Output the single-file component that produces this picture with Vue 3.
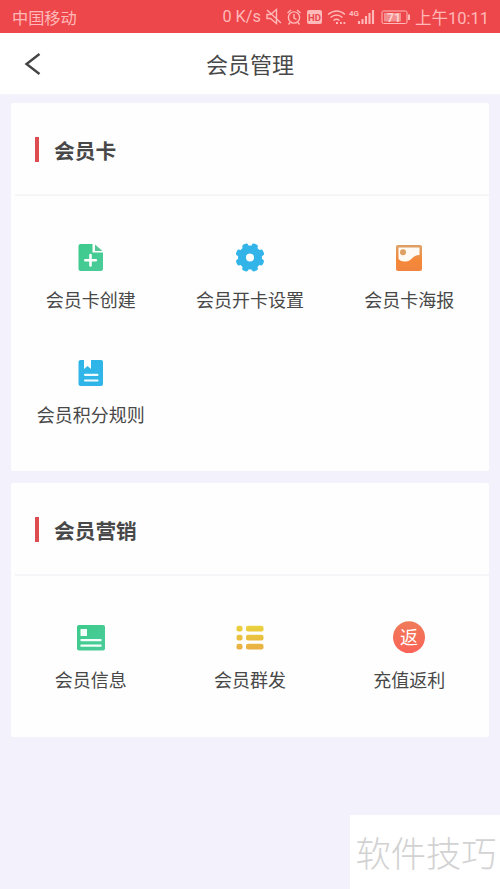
<script setup>
const sections = [
  {
    title: '会员卡',
    items: [
      { icon: 'create', label: '会员卡创建' },
      { icon: 'gear', label: '会员开卡设置' },
      { icon: 'poster', label: '会员卡海报' },
      { icon: 'rules', label: '会员积分规则' },
    ],
  },
  {
    title: '会员营销',
    items: [
      { icon: 'info', label: '会员信息' },
      { icon: 'list', label: '会员群发' },
      { icon: 'rebate', label: '充值返利' },
    ],
  },
]
const teeth = [22.5, 67.5, 112.5, 157.5, 202.5, 247.5, 292.5, 337.5]
</script>

<template>
  <div class="page">
    <svg class="defs" width="0" height="0">
      <defs>
        <linearGradient id="green" x2="1" y2="1"><stop stop-color="#3ccb8c" /><stop offset="1" stop-color="#4ccb99" /></linearGradient>
        <linearGradient id="coral" x2="0" y2="1"><stop stop-color="#ef7b58" /><stop offset="1" stop-color="#fb6359" /></linearGradient>
        <linearGradient id="orange" x2="0" y2="1"><stop stop-color="#dda067" /><stop offset=".6" stop-color="#f58838" /><stop offset="1" stop-color="#f08540" /></linearGradient>
        <linearGradient id="yellow" gradientUnits="userSpaceOnUse" x1="0" y1="4" x2="0" y2="28"><stop stop-color="#ead33e" /><stop offset="1" stop-color="#e9b043" /></linearGradient>
      </defs>
    </svg>
    <header class="status">
      <span class="carrier">中国移动</span>
      <span class="speed">0 K/s</span>
      <svg class="status-icons" width="148" height="24" viewBox="0 0 148 24" fill="none" stroke="#ffb9b8" stroke-width="1.4">
        <path d="M2 9.500h3.500l6-5v14l-6-5H2zM2 5l14 13" />
        <circle cx="29" cy="12.500" r="5.600" />
        <path d="M29 9v4l2.500 1.500M22.500 8l3.500-3M35.500 8L32 5M25 17.500l-1.500 2M33 17.500l1.500 2" />
        <rect x="42" y="5" width="15" height="14" rx="2" fill="#ffb9b8" stroke="none" />
        <text x="49.500" y="15.800" class="hd">HD</text>
        <path d="M63 9.500q9-7 17 0M65.500 12.500q6-5 12 0M68.500 15.500q3-2.500 6 0" />
        <path d="M71 18h2M75 18h1.800M78.500 18h1.800" stroke-width="2" />
        <text x="84" y="11" class="net">4G</text>
        <path d="M94 19v-3M97.500 19v-5M101 19v-8M104.500 19V8M108 19V5" stroke-width="2.100" />
        <rect x="117" y="6" width="25" height="12.500" rx="1.500" stroke-width="1" />
        <rect x="119" y="8" width="17" height="8.500" fill="#f28e8e" stroke="none" />
        <path d="M144 9.500v5.500" stroke-width="2" />
        <text x="129" y="16.500" class="charge">71</text>
      </svg>
      <span class="clock">上午10:11</span>
    </header>
    <nav class="nav">
      <svg class="back" width="18" height="24" viewBox="0 0 18 24" fill="none" stroke="#444" stroke-width="2.400">
        <path d="M15.500 2L2.500 12l13 10" />
      </svg>
      <h1>会员管理</h1>
      <span></span>
    </nav>
    <main>
      <section v-for="s in sections" :key="s.title" class="card">
        <h2><i></i>{{ s.title }}</h2>
        <div class="grid">
          <div v-for="item in s.items" :key="item.icon" class="item">
            <svg width="32" height="32" viewBox="0 0 32 32">
              <g v-if="item.icon === 'create'">
                <path d="M5.500 3H17.500V11.500H28V28Q28 30 26 30H5.500Q3.500 30 3.500 28V5Q3.500 3 5.500 3Z" fill="url(#green)" />
                <path d="M20 3.500L27.500 10H20Z" fill="#55c596" />
                <path d="M15.500 14v10.500M10.300 19.300h10.500" stroke="#fff" stroke-width="2.600" stroke-linecap="round" />
              </g>
              <g v-else-if="item.icon === 'gear'">
                <g fill="#32b4e9">
                  <circle cx="16" cy="16.500" r="12" />
                  <rect v-for="a in teeth" :key="a" x="12.800" y="2" width="6.400" height="8" rx="2.200" :transform="`rotate(${a} 16 16.5)`" />
                </g>
                <circle cx="16" cy="16.500" r="4" fill="#fff" />
              </g>
              <g v-else-if="item.icon === 'poster'">
                <rect x="3" y="4" width="26" height="26" rx="2" fill="url(#orange)" />
                <path d="M5.500 6.500H26.500V14C19 14 19 20.500 12.500 20.500Q8 21 5.500 18Z" fill="#fffaf3" />
                <circle cx="10" cy="11.300" r="3" fill="#dda062" />
              </g>
              <g v-else-if="item.icon === 'rules'">
                <path d="M5.500 4H9V13L12.500 10L16 13V4H26Q28 4 28 6V28Q28 30 26 30H5.500Q3.500 30 3.500 28V6Q3.500 4 5.500 4Z" fill="#30b5e9" />
                <path d="M10 18.800h12.500M10 24.500h12.500" stroke="#effcff" stroke-width="2.200" stroke-linecap="round" />
              </g>
              <g v-else-if="item.icon === 'info'">
                <rect x="2" y="4" width="28" height="25.500" rx="2" fill="url(#green)" />
                <path d="M5.500 8h6.500v7H5.500zM5.500 18h21v2.300h-21zM5.500 23.500h21v2.300h-21z" fill="#f4fff9" />
              </g>
              <g v-else-if="item.icon === 'list'" fill="url(#yellow)">
                <template v-for="n in 3" :key="n">
                  <rect x="2.500" :y="n * 9 - 4.2" width="6" height="5.600" rx="2" />
                  <rect x="12" :y="n * 9 - 4.2" width="17.500" height="5.600" rx="2" />
                </template>
              </g>
              <g v-else>
                <circle cx="16" cy="16.300" r="16" fill="url(#coral)" />
                <text x="16" y="22.500" class="fan">返</text>
              </g>
            </svg>
            <span>{{ item.label }}</span>
          </div>
        </div>
      </section>
    </main>
    <div class="watermark">软件技巧</div>
  </div>
</template>

<style>
body { margin: 0; }
</style>

<style scoped>
.page {
  position: relative;
  box-sizing: border-box;
  width: 500px;
  height: 889px;
  overflow: hidden;
  background: #f3f2fc;
  color: #484848;
  font-family: "Noto Sans CJK SC", sans-serif;
}
.defs { position: absolute; }
.status {
  display: flex;
  align-items: center;
  height: 33px;
  padding: 0 11px 0 12px;
  box-sizing: border-box;
  background: #ee474b;
  color: #ffb9b8;
  font-size: 16.200px;
  white-space: nowrap;
}
.speed { margin-left: auto; font-family: Roboto, sans-serif; font-size: 16.300px; }
.status-icons { margin: 0 2px 0 4px; flex: none; }
.hd { font: bold 9.500px Roboto, sans-serif; text-anchor: middle; fill: #e9474b; stroke: none; }
.net { font: bold 8px Roboto, sans-serif; fill: #ffb9b8; stroke: none; }
.charge { font: bold 12px Roboto, sans-serif; text-anchor: middle; fill: #ffd1d0; stroke: none; }
.clock { font-family: Roboto, "Noto Sans CJK SC", sans-serif; font-size: 16.500px; }
.nav {
  display: grid;
  grid-template-columns: 60px 1fr 60px;
  align-items: center;
  height: 61px;
  background: #fff;
  border-bottom: 1px solid #f5f4f9;
}
.back { margin-left: 24px; }
h1 { margin: 0 0 2px; font-size: 22px; font-weight: 400; text-align: center; line-height: 32px; }
main { display: flex; flex-direction: column; gap: 12px; padding: 8px 11px; }
.card { background: #fefefe; border-radius: 2px; }
h2 {
  display: flex;
  align-items: center;
  gap: 15px;
  height: 93px;
  margin: 0 0 0 4px;
  padding: 3px 0 0 20px;
  box-sizing: border-box;
  border-bottom: 2px solid #f6f6f8;
  font-size: 20.700px;
  font-weight: 700;
}
h2 i { width: 4px; height: 25px; margin-top: -2px; background: #dc4c50; }
.grid {
  display: grid;
  grid-template-columns: repeat(3, 1fr);
  grid-auto-rows: 115px;
  box-sizing: border-box;
  padding: 45px 0 0;
}
.card:first-child .grid { height: 275px; }
.card:last-child .grid { height: 161px; }
.item { display: flex; flex-direction: column; align-items: center; gap: 12px; font-size: 18px; line-height: 28px; }
.fan { font-size: 18px; text-anchor: middle; fill: #fff; }
.watermark {
  position: absolute;
  right: 0;
  bottom: 0;
  width: 150px;
  height: 74px;
  padding-left: 2px;
  box-sizing: border-box;
  background: #fff;
  color: #d2d2d2;
  font-size: 35.300px;
  font-weight: 300;
  line-height: 74px;
  text-align: center;
  white-space: nowrap;
}
</style>
